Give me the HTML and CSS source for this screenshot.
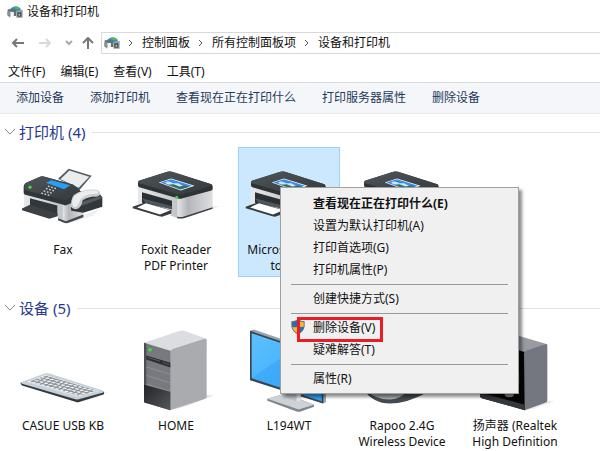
FILE: index.html
```html
<!DOCTYPE html>
<html lang="zh-CN">
<head>
    <meta charset="UTF-8">
    <meta name="viewport" content="width=device-width, initial-scale=1.0">
    <title>设备和打印机</title>
    <link rel="stylesheet" href="styles.css">
</head>
<body>
    <svg class="defs" aria-hidden="true">
        <defs>
            <linearGradient id="white-body" x1="0" x2="1">
                <stop offset="0" stop-color="#e9e9eb"/>
                <stop offset="1" stop-color="#c2c3c6"/>
            </linearGradient>
            <linearGradient id="side" x1="0" x2="1">
                <stop offset="0" stop-color="#e4e5e7"/>
                <stop offset="0.3" stop-color="#b4b5b8"/>
                <stop offset="1" stop-color="#dedfe1"/>
            </linearGradient>
            <linearGradient id="dark-top" x1="0" y1="0" x2="1" y2="1">
                <stop offset="0" stop-color="#4f5559"/>
                <stop offset="1" stop-color="#34393c"/>
            </linearGradient>
            <linearGradient id="screen" x1="0" y1="0" x2="1" y2="1">
                <stop offset="0" stop-color="#5cc0ff"/>
                <stop offset="1" stop-color="#35a7fb"/>
            </linearGradient>
            <linearGradient id="drive" x1="0" y1="0" x2="1" y2="1">
                <stop offset="0" stop-color="#222426"/>
                <stop offset="1" stop-color="#55585b"/>
            </linearGradient>
            <pattern id="keys" width="14" height="9" patternUnits="userSpaceOnUse" patternTransform="matrix(1 0.27 -1 0.62 0 0)">
                <rect width="14" height="9" fill="#858c92"/>
                <rect x="1" y="1" width="10" height="6" rx="1" fill="#eceff2"/>
            </pattern>
        </defs>
        <symbol id="app-icon" viewBox="0 0 48 36">
            <path d="M8 10Q24-6 42 9L36 18H14z" fill="#1f8ede"/>
            <path d="M18 2Q32-2 40 7L28 11z" fill="#53b84a"/>
            <path d="M2 10H28V30H20V17H10V30H2z" fill="#686d71"/>
            <path d="M1 17L10 14V34H5V27H1z" fill="#8b9094"/>
            <path d="M11 18H20V32H15V24H11z" fill="#f3f3f3"/>
            <path d="M28 14L47 11V35H28z" fill="#9b9fa3"/>
            <path d="M31 19H43V32H31z" fill="#3d4b4d"/>
            <circle cx="37" cy="26" r="3" fill="#a9c8be"/>
        </symbol>
        <symbol id="printer-icon" viewBox="375 96 306 282">
            <path d="M540 308L640 270L660 272L570 302z" fill="#f0f0f0"/>
            <path d="M414 212L535 250V308L512 301V282L430 262L414 268z" fill="url(#white-body)"/>
            <path d="M532 248L638 216V274Q638 279 630 282L552 306Q542 309 532 306z" fill="url(#side)"/>
            <path d="M532 303Q542 306 552 303L638 275V280L552 308Q542 310 532 308z" fill="#3d4246"/>
            <path d="M426 230L516 256V280L426 262z" fill="#2b3034"/>
            <path d="M426 248L516 272V282L436 262z" fill="#50575b"/>
            <path d="M398 274L436 260L514 284V294L486 304L478 302L398 278z" fill="#363c40"/>
            <path d="M411 276L438 263L511 284L480 297z" fill="#fff"/>
            <path d="M414 201Q414 198 418 196L502 169Q509 167 516 169L634 206Q638 208 638 213V220Q638 224 632 226L548 248Q540 251 532 248L418 215Q414 213 414 209z" fill="#2e3336"/>
            <path d="M414 200Q414 197 418 195L502 169Q509 167 516 169L634 206Q640 209 632 212L548 236Q540 239 532 236L418 203Q412 202 414 200z" fill="url(#dark-top)"/>
            <path d="M476 201L513 189L584 211L542 225z" fill="#f3f7f8"/>
            <path d="M481 201L513 191L576 211L541 222z" fill="#3b8bed"/>
            <path d="M495 202Q505 194 519 203L535 203L548 211L541 222L515 213z" fill="#cde8f6"/>
            <path d="M502 208L521 206L538 213L556 210L568 214L541 222z" fill="#367064"/>
            <circle cx="530" cy="245" r="4.500" fill="#35db3b"/>
        </symbol>
        <symbol id="shield-icon" viewBox="0 0 42 48">
            <path d="M21 1Q30 7 41 7V22Q39 38 21 47Q3 38 1 22V7Q12 7 21 1z" fill="#6c7177"/>
            <path d="M20 5V23H4V10Q13 9 20 5z" fill="#1b6fc4"/>
            <path d="M22 5Q29 9 38 10V23H22z" fill="#fdb92a"/>
            <path d="M4 25H20V43Q6 36 4 25z" fill="#fdb92a"/>
            <path d="M22 25H38Q36 36 22 43z" fill="#1b6fc4"/>
        </symbol>
    </svg>

    <header class="title-bar">
        <svg class="app-icon" aria-hidden="true"><use href="#app-icon"/></svg>
        <span>设备和打印机</span>
    </header>

    <nav class="address-row">
        <button class="nav-button" aria-label="后退">
            <svg width="14" height="12" viewBox="0 0 14 12"><path d="M13 6H2M6 2L2 6L6 10" stroke="#777"/></svg>
        </button>
        <button class="nav-button" aria-label="前进" disabled>
            <svg width="14" height="12" viewBox="0 0 14 12"><path d="M1 6H12M8 2L12 6L8 10" stroke="#d9d9d9"/></svg>
        </button>
        <button class="nav-button small" aria-label="最近的位置">
            <svg width="8" height="12" viewBox="0 0 8 12"><path d="M1 4L4 7L7 4" stroke="#aaa"/></svg>
        </button>
        <button class="nav-button up" aria-label="上移">
            <svg width="12" height="12" viewBox="0 0 12 12"><path d="M6 12V2M1 6L6 1L11 6" stroke="#777"/></svg>
        </button>
        <div class="address-bar">
            <svg class="app-icon" aria-hidden="true"><use href="#app-icon"/></svg>
            <svg class="crumb-arrow" viewBox="0 0 6 8"><path d="M1 1L4 4L1 7"/></svg>
            <a href="#">控制面板</a>
            <svg class="crumb-arrow" viewBox="0 0 6 8"><path d="M1 1L4 4L1 7"/></svg>
            <a href="#">所有控制面板项</a>
            <svg class="crumb-arrow" viewBox="0 0 6 8"><path d="M1 1L4 4L1 7"/></svg>
            <a href="#">设备和打印机</a>
        </div>
    </nav>

    <div class="menu-bar">
        <button>文件(F)</button>
        <button>编辑(E)</button>
        <button>查看(V)</button>
        <button>工具(T)</button>
    </div>

    <div class="toolbar">
        <button>添加设备</button>
        <button>添加打印机</button>
        <button>查看现在正在打印什么</button>
        <button>打印服务器属性</button>
        <button>删除设备</button>
    </div>

    <main class="content">
        <section class="group">
            <h2 class="group-header">
                <svg class="chevron" viewBox="0 0 12 8"><path d="M1 1L6 6L11 1"/></svg>
                <span>打印机 (4)</span>
            </h2>
            <div class="tiles">
                <button class="tile">
                    <svg class="tile-icon" viewBox="36 96 306 282" aria-hidden="true">
                        <path d="M200 318L300 280L280 300L220 320z" fill="#efefef"/>
                        <path d="M174 190L206 160L275 181L238 224z" fill="#565c60"/>
                        <path d="M181 191L208 165L268 184L236 217z" fill="#ebecee"/>
                        <path d="M72 228L192 264V320L174 312V296L92 272L72 282z" fill="url(#white-body)"/>
                        <path d="M188 264L250 250V300L206 320Q196 323 188 319z" fill="url(#side)"/>
                        <path d="M174 308L198 317L250 297V305L206 322Q198 325 190 321L174 314z" fill="#43494d"/>
                        <path d="M90 248L172 270V300L90 278z" fill="#30363a"/>
                        <path d="M66 279L90 268L173 294V302L148 310L66 284z" fill="#3b4145"/>
                        <path d="M71 218Q70 207 78 202L120 184Q127 181 134 184L220 208L246 230L234 254L202 268Q196 271 190 268L76 238Q70 236 71 230z" fill="#30363a"/>
                        <path d="M73 216Q74 205 82 201L120 184Q127 181 134 184L220 208L240 228L200 252Q194 255 188 253L78 224Q73 222 73 216z" fill="url(#dark-top)"/>
                        <path d="M138 202L154 194L211 209L192 221Z" fill="#26a0f7"/>
                        <path d="M144 212L170 220M138 219L165 227M131 226L158 234M124 233L150 240" stroke="#d5d9dc" stroke-width="4" stroke-dasharray="5 5"/>
                        <circle cx="90" cy="215" r="5" fill="#37e03c"/>
                        <path d="M212 276L236 254L300 236L307 246V274L250 292L214 286z" fill="#31373b"/>
                        <path d="M236 262L300 242L306 248L248 270z" fill="#555c61"/>
                        <path d="M214 256Q216 234 248 226Q278 218 296 226Q303 231 298 240Q288 247 278 242Q258 244 247 256Q246 272 236 278Q219 286 212 272z" fill="#c9cbcd"/>
                        <path d="M217 254Q222 236 249 228Q277 220 294 228Q298 234 288 235Q254 236 241 252Q237 268 226 275Q214 272 217 254z" fill="#ededee"/>
                    </svg>
                    <span>Fax</span>
                </button>
                <button class="tile">
                    <svg class="tile-icon" aria-hidden="true"><use href="#printer-icon"/></svg>
                    <span>Foxit Reader PDF Printer</span>
                </button>
                <button class="tile selected">
                    <svg class="tile-icon" aria-hidden="true"><use href="#printer-icon"/></svg>
                    <span>Microsoft Print to PDF</span>
                </button>
                <button class="tile" aria-label="打印机">
                    <svg class="tile-icon" aria-hidden="true"><use href="#printer-icon"/></svg>
                </button>
            </div>
        </section>

        <section class="group">
            <h2 class="group-header">
                <svg class="chevron" viewBox="0 0 12 8"><path d="M1 1L6 6L11 1"/></svg>
                <span>设备 (5)</span>
            </h2>
            <div class="tiles">
                <button class="tile">
                    <svg class="tile-icon" viewBox="36 102 306 282" aria-hidden="true">
                        <path d="M240 336L312 308L328 306L290 326z" fill="#efefef"/>
                        <path d="M62 278L232 326L312 306V314L240 337Q233 340 226 337L66 288Q61 286 62 278z" fill="#333a40"/>
                        <path d="M62 278L128 254Q138 250 148 252L306 302Q316 306 308 310L242 328Q234 331 226 329L66 283z" fill="#c6ced6"/>
                        <path d="M80 277L136 256L300 304L234 322z" fill="#e4e9ee"/>
                        <path d="M88 276L138 258L292 304L236 319z" fill="url(#keys)"/>
                    </svg>
                    <span>CASUE USB KB</span>
                </button>
                <button class="tile">
                    <svg class="tile-icon" viewBox="375 102 306 282" aria-hidden="true">
                        <path d="M512 362L622 316L642 318L560 350z" fill="#e8e8e8"/>
                        <path d="M432 160L540 124Q546 122 552 124L620 148L514 188z" fill="#dcdde0"/>
                        <path d="M510 186Q512 182 520 178L614 148Q620 147 620 152V322Q620 326 616 328L510 362z" fill="#a9abae"/>
                        <path d="M432 160L511 184V362L436 340Q432 338 432 334z" fill="#77797e"/>
                        <path d="M432 160L439 162V342L432 338z" fill="#4c4f53"/>
                        <path d="M439 198L511 220V234L439 210z" fill="#2c2e31"/>
                        <path d="M443 204L480 215M488 219L507 225" stroke="#56595d" stroke-width="3"/>
                        <path d="M439 232L511 255M439 258L511 280M439 284L511 305" stroke="#9a9ca0" stroke-width="2"/>
                        <path d="M432 286L511 307V362L436 340Q432 338 432 334z" fill="url(#drive)"/>
                        <circle cx="450" cy="181" r="5.500" fill="#34e23b"/>
                    </svg>
                    <span>HOME</span>
                </button>
                <button class="tile">
                    <svg class="tile-icon" viewBox="24 102 306 282" aria-hidden="true">
                        <path d="M60 124L72 120L288 194V338L278 342L60 270z" fill="#9aa4ac"/>
                        <path d="M60 124L280 198V342L60 272z" fill="#39444c"/>
                        <path d="M65 131L275 202V335L65 266z" fill="url(#screen)"/>
                        <path d="M65 266L190 180L275 208V335z" fill="#1c8bec" opacity="0.25"/>
                        <path d="M112 334V328L166 312L252 346V352L212 366Q206 368 200 366z" fill="#7d868c"/>
                        <path d="M112 328L166 312L252 346L206 360z" fill="#ccd2d6"/>
                        <path d="M172 300H212V332L200 336L172 326z" fill="#bcc3c8"/>
                        <path d="M200 300H212V332L200 336z" fill="#e9ecee"/>
                    </svg>
                    <span>L194WT</span>
                </button>
                <button class="tile">
                    <svg class="tile-icon" viewBox="363 102 306 282" aria-hidden="true">
                        <path d="M400 300Q430 342 480 342Q530 342 592 308L560 260L440 250z" fill="#434b51"/>
                        <path d="M410 304Q440 332 482 330Q512 328 526 310L500 260z" fill="#a4acb1"/>
                    </svg>
                    <span>Rapoo 2.4G Wireless Device</span>
                </button>
                <button class="tile">
                    <svg class="tile-icon" viewBox="702 102 306 282" aria-hidden="true">
                        <path d="M884 362L950 332L974 336L910 358z" fill="#ececec"/>
                        <path d="M750 150L850 134L952 164L884 190z" fill="#999ba2"/>
                        <path d="M750 150L886 188V362L756 326Q750 324 750 318z" fill="#050505"/>
                        <path d="M882 192Q882 186 888 184L946 164Q952 162 952 168V332Q952 338 946 340L884 362z" fill="#747780"/>
                        <path d="M750 308L884 346V362L756 326Q750 324 750 318z" fill="#34373b"/>
                        <ellipse cx="836" cy="268" rx="34" ry="48" fill="#17191b"/>
                        <ellipse cx="838" cy="316" rx="14" ry="7" fill="#85888c"/>
                    </svg>
                    <span>扬声器 (Realtek High Definition</span>
                </button>
            </div>
        </section>

        <div class="context-menu" role="menu">
            <button class="default" role="menuitem">查看现在正在打印什么(E)</button>
            <button role="menuitem">设置为默认打印机(A)</button>
            <button role="menuitem">打印首选项(G)</button>
            <button role="menuitem">打印机属性(P)</button>
            <hr>
            <button role="menuitem">创建快捷方式(S)</button>
            <hr>
            <button class="remove" role="menuitem">
                <svg class="shield" aria-hidden="true"><use href="#shield-icon"/></svg>
                <span>删除设备(V)</span>
            </button>
            <button role="menuitem">疑难解答(T)</button>
            <hr>
            <button role="menuitem">属性(R)</button>
        </div>
    </main>
</body>
</html>
```

FILE: styles.css
```css
*,
*::after {
    box-sizing: border-box;
}
body {
    display: flex;
    flex-direction: column;
    height: 100vh;
    margin: 0;
    background-color: #fff;
    color: #111;
    font-family: "Noto Sans", "Noto Sans CJK SC", sans-serif;
    font-size: 12px;
    line-height: 16px;
}
button {
    margin: 0;
    padding: 0;
    border: none;
    background: none;
    color: inherit;
    font: inherit;
    white-space: nowrap;
}
a {
    color: inherit;
    text-decoration: none;
}
.defs {
    position: absolute;
    width: 0;
    height: 0;
}
.app-icon {
    width: 16px;
    height: 12px;
}

.title-bar {
    display: flex;
    align-items: center;
    gap: 4px;
    height: 24px;
    padding: 0 7px;
}

.address-row {
    display: flex;
    align-items: center;
    padding: 8px 0 0 11px;
    height: 30px;
}
.nav-button {
    display: flex;
    margin-right: 13px;
}
.nav-button.small {
    margin-right: 9px;
}
.nav-button.up {
    margin-right: 7px;
}
.nav-button path,
.crumb-arrow path,
.chevron path {
    fill: none;
    stroke-width: 2;
}
.address-bar {
    flex: 1;
    display: flex;
    align-items: center;
    height: 22px;
    padding-left: 2px;
    border: 1px solid #d9d9d9;
    border-right: none;
}
.crumb-arrow {
    width: 6px;
    height: 8px;
    margin: 0 8px;
}
.crumb-arrow path {
    stroke: #555;
    stroke-width: 1;
}

.menu-bar {
    display: flex;
    align-items: center;
    gap: 15px;
    height: 28px;
    padding: 8px 8px 0;
}

.toolbar {
    display: flex;
    align-items: center;
    gap: 26px;
    height: 32px;
    padding: 0 16px;
    background-color: #f4f6f9;
    border-top: 1px solid #d9dcdf;
    border-bottom: 1px solid #e8ebee;
    color: #1e395b;
}

.content {
    position: relative;
    flex: 1;
    min-height: 0;
    padding-top: 8px;
    overflow: hidden;
}
.group-header {
    display: flex;
    align-items: center;
    height: 20px;
    margin: 0 0 5px;
    padding-left: 4px;
    color: #26398f;
    font-size: 15px;
    font-weight: normal;
}
.group-header::after {
    content: "";
    flex: 1;
    height: 1px;
    margin-left: 7px;
    background-color: #e2e2e2;
}
.chevron {
    width: 12px;
    height: 8px;
    margin-right: 3px;
}
.chevron path {
    stroke: #8a8a8a;
    stroke-width: 1;
}
.tiles {
    display: grid;
    grid-template-columns: repeat(auto-fill, 102px);
    gap: 11px;
    margin-bottom: 21px;
    padding-left: 12px;
}
.tile {
    display: flex;
    flex-direction: column;
    align-items: center;
    min-height: 130px;
    border: 1px solid transparent;
    white-space: normal;
}
.tile span {
    max-width: 92px;
}
.tile.selected {
    background-color: #cce8ff;
    border-color: #99d1ff;
}
.tile-icon {
    width: 102px;
    height: 95px;
    margin: -1px -1px 0;
}

.context-menu {
    position: absolute;
    top: 73px;
    left: 280px;
    width: 239px;
    padding: 5px 0 3px;
    background-color: #f0f0f0;
    border: 1px solid #a0a0a0;
    box-shadow: 3px 3px 3px rgba(0, 0, 0, 0.45);
}
.context-menu button {
    display: block;
    width: 100%;
    height: 22px;
    padding-left: 32px;
    text-align: left;
}
.context-menu .default {
    font-weight: bold;
}
.context-menu hr {
    height: 1px;
    margin: 3px 10px;
    border: none;
    background-color: #999;
}
.context-menu .remove {
    position: relative;
}
.remove::after {
    content: "";
    position: absolute;
    top: 0;
    left: 16px;
    width: 86px;
    height: 25px;
    border: 3px solid #ed1c24;
}
.shield {
    position: absolute;
    top: 2px;
    left: 10px;
    width: 14px;
    height: 16px;
}
```
